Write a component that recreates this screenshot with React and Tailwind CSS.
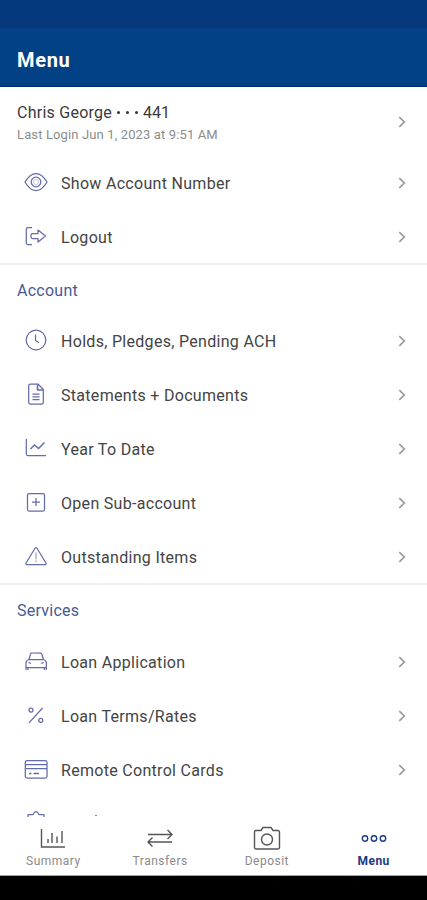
import React from "react";

const ICONS = {
  eye: (
    <>
      <path d="M1 12C4 6.800 7.600 3.500 12 3.500s8 3.300 11 8.500c-3 5.200-6.600 8.500-11 8.500S4 17.200 1 12z" />
      <circle cx="12" cy="12" r="4.800" />
      <circle cx="12" cy="12" r="2.500" strokeWidth="0.4" />
    </>
  ),
  logout: (
    <>
      <path d="M8 3.500H3.800a1.500 1.500 0 0 0-1.500 1.500v14a1.500 1.500 0 0 0 1.500 1.500H8" />
      <path d="M8.500 9.500H14V6l7.500 6-7.500 6v-3.500H8.500a1.500 1.500 0 0 1-1.500-1.500v-2a1.500 1.500 0 0 1 1.500-1.500z" />
    </>
  ),
  clock: (
    <>
      <circle cx="12" cy="12" r="9.800" />
      <path d="M11.500 6.500v6l3.500 2.200" />
    </>
  ),
  document: (
    <>
      <path d="M14 2H6.500A1.800 1.800 0 0 0 4.700 3.800v16.400A1.800 1.800 0 0 0 6.500 22h11a1.800 1.800 0 0 0 1.800-1.800V7.500z" />
      <path d="M13.500 2.500V8h5.500" strokeWidth="1.600" />
      <path d="M8.500 12h7M8.500 14.800h7M8.500 17.600h7" />
    </>
  ),
  chart: (
    <>
      <path d="M2.300 3v15a1.500 1.500 0 0 0 1.500 1.500H22" />
      <path d="M6.500 13l4-4 4 3.500L20.500 6.500" strokeWidth="1.500" />
    </>
  ),
  plus: (
    <>
      <rect x="3.500" y="3.500" width="17" height="17.500" rx="1.500" />
      <path d="M12 8v8M8 12h8" />
    </>
  ),
  warning: (
    <>
      <path d="M11.200 4L2.200 18.800a1 1 0 0 0 .8 1.700h18a1 1 0 0 0 .8-1.700L12.800 4a.9.9 0 0 0-1.600 0z" />
      <path d="M12 8.500v7M12 16.500v1.500" strokeWidth="0.8" />
    </>
  ),
  car: (
    <>
      <path d="M2 21v-7.500c0-1.500.8-2.300 3-3l1.500-5.300A1.500 1.500 0 0 1 8 4h8.500a1.500 1.500 0 0 1 1.400 1.200l1.600 5.300c2 .7 2.800 1.500 2.800 3V21" />
      <path d="M5 10.500h14.500M2 18.500h20.300M4 18.500V21M20.300 18.500V21" />
      <path d="M4.500 13.500l2.500.8M19.800 13.500l-2.500.8" />
    </>
  ),
  percent: (
    <>
      <circle cx="7" cy="7" r="2" />
      <circle cx="16.800" cy="17.300" r="2" />
      <path d="M18.500 5L5 19.800" />
    </>
  ),
  card: (
    <>
      <rect x="1.300" y="3.500" width="21.700" height="17.500" rx="1.800" />
      <path d="M1.500 7.500H23M1.500 11.500H23" />
      <path d="M5 16.500h2.500M9.500 16.500h5.500" strokeWidth="1.500" />
    </>
  ),
  badge: <path d="M4 5.500h5c.8 0 .3-3 3-3s2.200 3 3 3h5v15H4z" />,
};

const account = [
  { label: "Holds, Pledges, Pending ACH", icon: "clock" },
  { label: "Statements + Documents", icon: "document" },
  { label: "Year To Date", icon: "chart" },
  { label: "Open Sub-account", icon: "plus" },
  { label: "Outstanding Items", icon: "warning" },
];

const services = [
  { label: "Loan Application", icon: "car" },
  { label: "Loan Terms/Rates", icon: "percent" },
  { label: "Remote Control Cards", icon: "card" },
];

function Icon({ name }) {
  return (
    <svg
      viewBox="0 0 24 24"
      className="h-6 w-6 shrink-0 text-[#646ca8]"
      fill="none"
      stroke="currentColor"
      strokeWidth="1.250"
      strokeLinejoin="round"
    >
      {ICONS[name]}
    </svg>
  );
}

function Chevron() {
  return (
    <svg viewBox="0 0 8 12" className="mt-0.5 h-3 w-2 shrink-0 text-[#999999]" fill="none" stroke="currentColor" strokeWidth="1.700">
      <path d="M1.300 1.200L6.300 6l-5 4.800" />
    </svg>
  );
}

function MenuRow({ label, icon }) {
  return (
    <div className="flex h-[54px] shrink-0 items-center pr-[21px] pl-6">
      <Icon name={icon} />
      <span className="ml-[13px] flex-1 pt-[3px] text-base leading-5 tracking-[0.3px] whitespace-nowrap text-[#444444]">
        {label}
      </span>
      <Chevron />
    </div>
  );
}

function SectionTitle({ children }) {
  return (
    <div className="flex h-[50px] shrink-0 items-center border-t-2 border-[#efeff0] pt-[3px] pl-[17px] text-base tracking-[0.25px] text-[#465a96]">
      {children}
    </div>
  );
}

function Tab({ label, active, children }) {
  return (
    <div className={`flex flex-1 flex-col items-center ${active ? "text-[#1c3a82]" : "text-[#8a8a8a]"}`}>
      <svg
        viewBox="0 0 28 26"
        className={`mt-2 h-[26px] w-7 ${active ? "text-[#1c3a82]" : "text-[#555555]"}`}
        fill="none"
        stroke="currentColor"
        strokeWidth="1.400"
      >
        {children}
      </svg>
      <span className={`mt-[3px] text-xs leading-[14px] ${active ? "font-bold tracking-[0.5px]" : "tracking-[0.5px]"}`}>
        {label}
      </span>
    </div>
  );
}

function App() {
  return (
    <div className="flex h-[900px] w-[427px] flex-col overflow-hidden bg-white font-['Roboto',sans-serif]">
      <div className="h-7 shrink-0 bg-[#05397b]" />
      <header className="flex h-[59px] shrink-0 items-center border-b border-[#062b70] bg-[#034186] pt-1.5 pl-[17px]">
        <h1 className="text-xl leading-6 font-bold tracking-[0.7px] text-white">Menu</h1>
      </header>

      <main className="flex min-h-0 flex-1 flex-col overflow-hidden">
        <div className="flex h-[68px] shrink-0 items-center pr-[21px] pl-[17px]">
          <div className="flex-1 pt-[3px]">
            <div className="flex items-center text-base leading-5 text-[#3a3a3a]">
              <span className="tracking-[0.25px]">Chris George</span>
              <span className="mx-[5px] flex gap-[6px]">
                <i className="size-[3px] rounded-full bg-[#333333]" />
                <i className="size-[3px] rounded-full bg-[#333333]" />
                <i className="size-[3px] rounded-full bg-[#333333]" />
              </span>
              <span>441</span>
            </div>
            <div className="mt-1 text-[13px] leading-4 tracking-[0.13px] text-[#8c8c8c]">Last Login Jun 1, 2023 at 9:51 AM</div>
          </div>
          <Chevron />
        </div>
        <MenuRow label="Show Account Number" icon="eye" />
        <MenuRow label="Logout" icon="logout" />

        <SectionTitle>Account</SectionTitle>
        {account.map((item) => (
          <MenuRow key={item.label} {...item} />
        ))}

        <SectionTitle>Services</SectionTitle>
        <div className="flex shrink-0 flex-col pt-px">
          {services.map((item) => (
            <MenuRow key={item.label} {...item} />
          ))}
        </div>

        {/* next row, cut off by the tab bar */}
        <div className="flex h-[54px] shrink-0 items-start pt-[13px] pl-6">
          <Icon name="badge" />
          <i className="mt-[6px] ml-[47px] h-px w-[2px] bg-[#888888]" />
        </div>
      </main>

      <nav className="flex h-[59px] shrink-0 border-b border-[#a5a5a5] bg-white">
        <Tab label="Summary">
          <path d="M2.500 4v18H26" />
          <path d="M9 14v4M13 8v10M18 11.500v6.500M23 6v12" />
        </Tab>
        <Tab label="Transfers">
          <path d="M2 9.500H26M21.500 5l4.500 4.500-4.500 4.500M26 17H2M6.500 12.500L2 17l4.500 4.500" />
        </Tab>
        <Tab label="Deposit">
          <path d="M3 5.500h5l2-3h8l2 3h5A1.500 1.500 0 0 1 26.500 7v15.500A1.500 1.500 0 0 1 25 24H3a1.500 1.500 0 0 1-1.500-1.500V7A1.500 1.500 0 0 1 3 5.500z" />
          <circle cx="14" cy="14.500" r="5.500" />
        </Tab>
        <Tab label="Menu" active>
          <circle cx="5" cy="13.500" r="2.700" />
          <circle cx="14" cy="13.500" r="2.700" />
          <circle cx="23" cy="13.500" r="2.700" />
        </Tab>
      </nav>
      <div className="h-6 shrink-0 bg-black" />
    </div>
  );
}

export default App;
